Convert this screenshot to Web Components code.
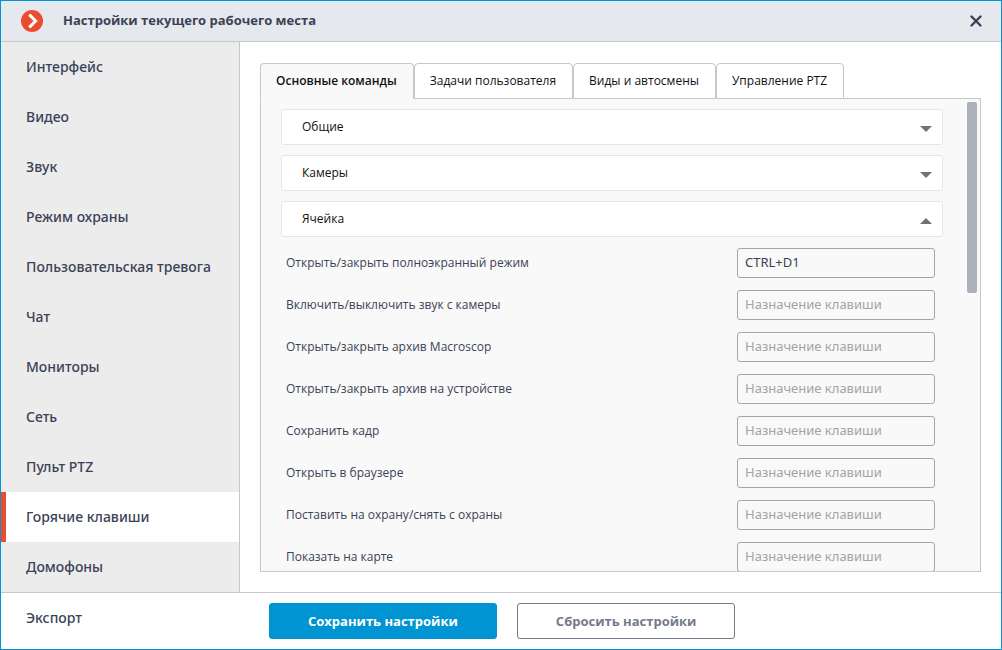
<!DOCTYPE html>
<html lang="ru">
<head>
<meta charset="utf-8">
<title>Настройки текущего рабочего места</title>
<style>
  :root {
    --accent: #0094d3;
    --brand: #ea4c30;
    --ink: #3b4256;
    --line: #c6c6cc;
    --panel: #f9f9f9;
  }
  html, body { height: 100%; margin: 0; }
  body { font: 12px/20px "Open Sans", "Noto Sans", sans-serif; color: var(--ink); }
</style>
</head>
<body>
<settings-window>
  <title-bar slot="header">Настройки текущего рабочего места</title-bar>
  <nav-item slot="nav">Интерфейс</nav-item>
  <nav-item slot="nav">Видео</nav-item>
  <nav-item slot="nav">Звук</nav-item>
  <nav-item slot="nav">Режим охраны</nav-item>
  <nav-item slot="nav">Пользовательская тревога</nav-item>
  <nav-item slot="nav">Чат</nav-item>
  <nav-item slot="nav">Мониторы</nav-item>
  <nav-item slot="nav">Сеть</nav-item>
  <nav-item slot="nav">Пульт PTZ</nav-item>
  <nav-item slot="nav" current>Горячие клавиши</nav-item>
  <nav-item slot="nav">Домофоны</nav-item>
  <nav-item slot="nav-end">Экспорт</nav-item>

  <tab-item slot="tab" selected>Основные команды</tab-item>
  <tab-item slot="tab">Задачи пользователя</tab-item>
  <tab-item slot="tab">Виды и автосмены</tab-item>
  <tab-item slot="tab">Управление PTZ</tab-item>

  <scroll-panel slot="panel">
    <fold-section label="Общие"></fold-section>
    <fold-section label="Камеры"></fold-section>
    <fold-section label="Ячейка" open>
      <hotkey-row label="Открыть/закрыть полноэкранный режим" value="CTRL+D1"></hotkey-row>
      <hotkey-row label="Включить/выключить звук с камеры"></hotkey-row>
      <hotkey-row label="Открыть/закрыть архив Macroscop"></hotkey-row>
      <hotkey-row label="Открыть/закрыть архив на устройстве"></hotkey-row>
      <hotkey-row label="Сохранить кадр"></hotkey-row>
      <hotkey-row label="Открыть в браузере"></hotkey-row>
      <hotkey-row label="Поставить на охрану/снять с охраны"></hotkey-row>
      <hotkey-row label="Показать на карте"></hotkey-row>
    </fold-section>
  </scroll-panel>

  <action-button slot="action" primary>Сохранить настройки</action-button>
  <action-button slot="action">Сбросить настройки</action-button>
</settings-window>

<script>
const define = (name, html, setup) => {
  const template = document.createElement('template');
  template.innerHTML = html;
  customElements.define(name, class extends HTMLElement {
    constructor() {
      super();
      this.attachShadow({ mode: 'open' }).append(template.content.cloneNode(true));
    }
    connectedCallback() { if (setup) setup(this, this.shadowRoot); }
  });
};

define('settings-window', `
  <style>
    :host { display: grid; grid-template: auto minmax(0, 1fr) auto / 239px minmax(0, 1fr);
      box-sizing: border-box; height: 100vh; border: 1px solid var(--accent); background: #fff; }
    header { grid-column: 1 / -1; }
    nav { box-sizing: border-box; background: #ececec; border-right: 1px solid var(--line); overflow: hidden; }
    main { display: flex; flex-direction: column; padding: 21px 20px 20px; min-height: 0; }
    .tabs { display: flex; }
    ::slotted([slot=panel]) { flex: 1; min-height: 0; }
    footer { grid-column: 1 / -1; display: grid; grid-template-columns: subgrid; border-top: 1px solid var(--line); height: 56px; }
    .actions { display: flex; gap: 20px; padding: 10px 29px; }
  </style>
  <header><slot name="header"></slot></header>
  <nav><slot name="nav"></slot></nav>
  <main>
    <div class="tabs" role="tablist"><slot name="tab"></slot></div>
    <slot name="panel"></slot>
  </main>
  <footer>
    <div><slot name="nav-end"></slot></div>
    <div class="actions"><slot name="action"></slot></div>
  </footer>`);

define('title-bar', `
  <style>
    :host { display: flex; align-items: center; height: 40px; padding: 0 16px 0 20px;
      background: #e5e9ee; border-bottom: 1px solid var(--line); }
    svg { display: block; }
    h1 { flex: 1; margin: 0 0 0 20px; padding-bottom: 2px; font-size: 13px; line-height: 20px; font-weight: 700; }
    button { border: 0; padding: 2px; background: none; color: inherit; }
  </style>
  <svg width="22" height="22" viewBox="0 0 22 22" aria-hidden="true">
    <circle cx="11" cy="11" r="11" fill="#ea4c30"/>
    <path d="M8.3 4.6 14.6 11 8.3 17.4" fill="none" stroke="#fff" stroke-width="3"/>
  </svg>
  <h1><slot></slot></h1>
  <button type="button" aria-label="Закрыть">
    <svg width="14" height="14" viewBox="0 0 14 14"><path d="M2.5 2.5 11.5 11.5M11.5 2.5 2.5 11.5" stroke="currentColor" stroke-width="2.4" stroke-linecap="round"/></svg>
  </button>`);

define('nav-item', `
  <style>
    :host { display: block; }
    a { display: block; box-sizing: border-box; height: 50px; padding: 0 20px; border-left: 5px solid transparent;
      font: 500 14px/50px "Noto Sans", sans-serif; color: inherit; text-decoration: none; white-space: nowrap; }
    :host([current]) a { background: #fff; border-left-color: var(--brand); }
  </style>
  <a href="#"><slot></slot></a>`);

define('tab-item', `
  <style>
    :host { display: block; margin-bottom: -1px; z-index: 1; }
    button { display: block; box-sizing: border-box; height: 36px; padding: 0 16px 0 15px; font: inherit; color: #111;
      background: #fff; border: 1px solid var(--line); border-radius: 4px 4px 0 0; white-space: nowrap; }
    :host([selected]) button { background: var(--panel); border-bottom-color: var(--panel); font-weight: 600; }
  </style>
  <button type="button" role="tab"><slot></slot></button>`,
  (el, root) => root.querySelector('button').setAttribute('aria-selected', el.hasAttribute('selected')));

define('scroll-panel', `
  <style>
    :host { display: flex; box-sizing: border-box; background: var(--panel); border: 1px solid var(--line); }
    .view { flex: 1; min-width: 0; overflow-y: auto; scrollbar-width: none; padding: 10px 24px 0 20px; }
    .track { width: 10px; padding: 3px 3px 3px 0; }
    .thumb { height: 41%; background: #abb0ba; border-radius: 2px; }
  </style>
  <div class="view"><slot></slot></div>
  <div class="track"><div class="thumb"></div></div>`);

define('fold-section', `
  <style>
    :host { display: block; margin-bottom: 10px; }
    button { display: flex; align-items: center; justify-content: space-between; box-sizing: border-box; width: 100%;
      height: 36px; padding: 0 10px 0 20px; font: inherit; color: #111; background: #fff;
      border: 1px solid #e5e5ea; border-radius: 3px; }
    svg { display: block; margin-top: 4px; }
    :host([open]) svg { transform: rotate(180deg); }
    .body { display: none; }
    :host([open]) .body { display: block; padding: 5px 8px 0 5px; }
  </style>
  <button type="button"><span></span>
    <svg width="12" height="6" viewBox="0 0 12 6" aria-hidden="true"><path d="M0 0H12L6 6Z" fill="#767070"/></svg>
  </button>
  <div class="body"><slot></slot></div>`,
  (el, root) => {
    const button = root.querySelector('button');
    root.querySelector('span').textContent = el.getAttribute('label');
    button.setAttribute('aria-expanded', el.hasAttribute('open'));
    button.onclick = () => button.setAttribute('aria-expanded', el.toggleAttribute('open'));
  });

define('hotkey-row', `
  <style>
    :host { display: flex; align-items: center; justify-content: space-between; height: 42px; }
    input { box-sizing: border-box; width: 198px; height: 30px; padding: 0 7px 2px;
      font: 13px "Noto Sans", sans-serif; color: inherit;
      background: transparent; border: 1px solid #a5a5aa; border-radius: 3px; }
    input::placeholder { color: #a3a3a8; opacity: 1; }
  </style>
  <label for="key"></label>
  <input id="key" type="text" placeholder="Назначение клавиши">`,
  (el, root) => {
    root.querySelector('label').textContent = el.getAttribute('label');
    root.querySelector('input').value = el.getAttribute('value') || '';
  });

define('action-button', `
  <style>
    :host { display: block; }
    button { box-sizing: border-box; height: 36px; padding: 0 38px; font: inherit; font-size: 13px; font-weight: 700;
      color: #747a88; background: #fff; border: 1px solid #747a88; border-radius: 3px; white-space: nowrap; }
    :host([primary]) button { color: #fff; background: var(--accent); border-color: var(--accent); }
  </style>
  <button type="button"><slot></slot></button>`);
</script>
</body>
</html>
